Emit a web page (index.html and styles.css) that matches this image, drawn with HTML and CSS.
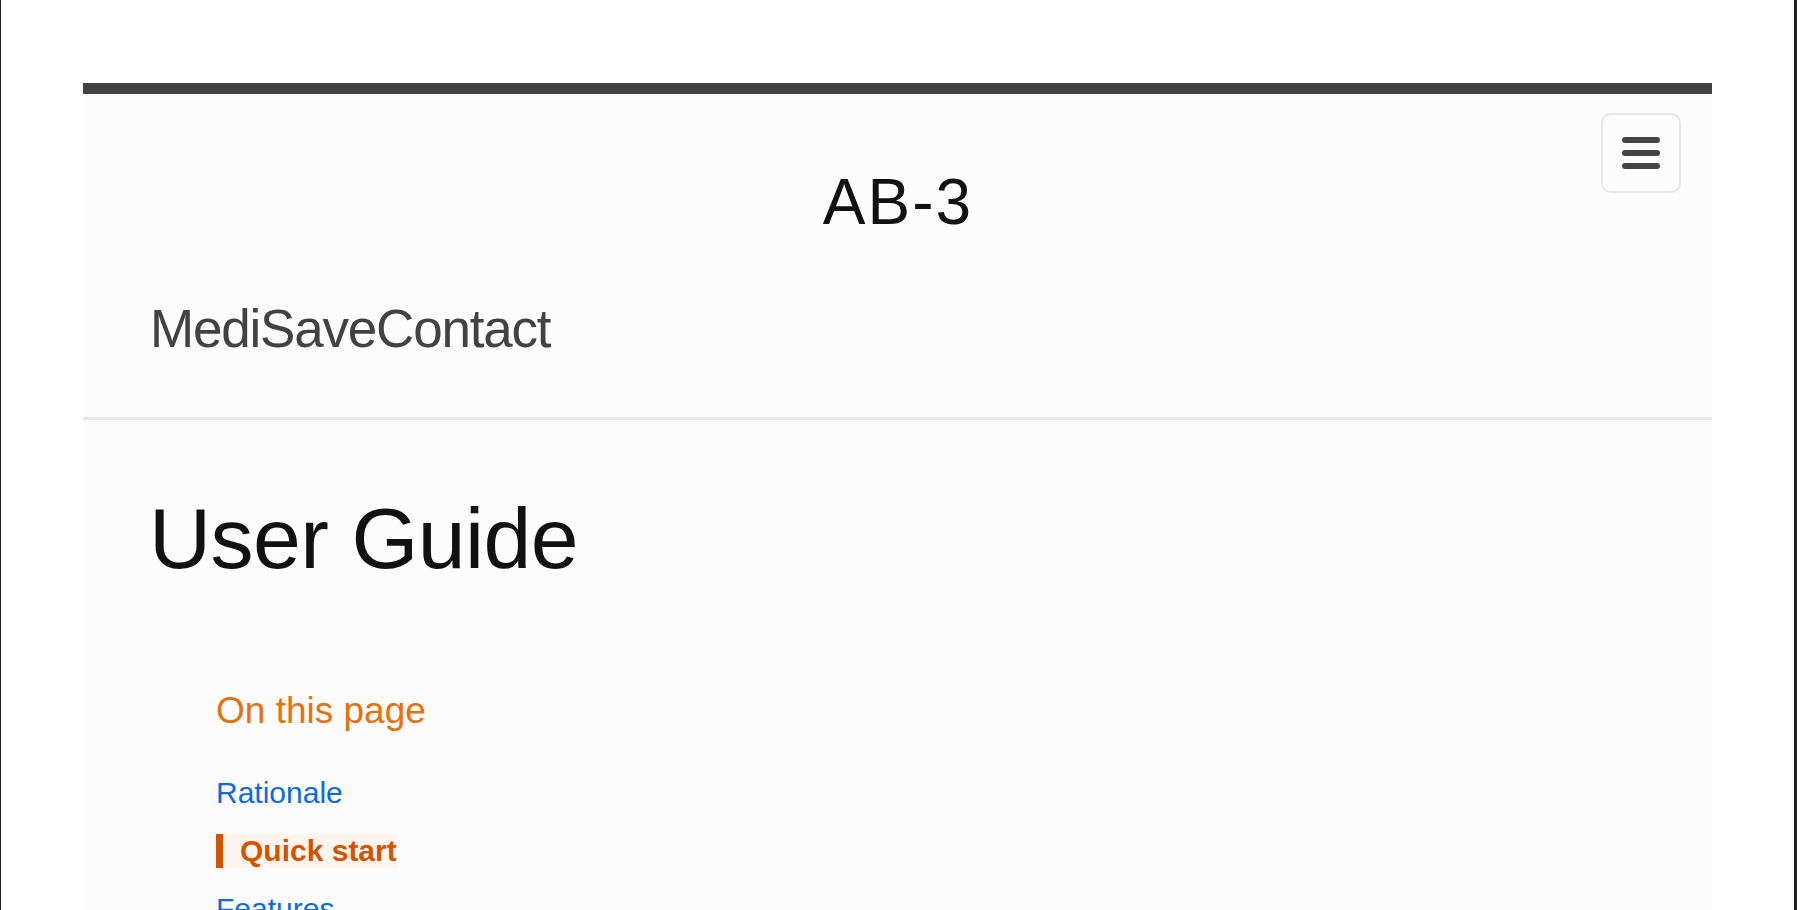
FILE: index.html
```html
<!DOCTYPE html>
<html lang="en">
<head>
<meta charset="utf-8">
<title>User Guide - MediSaveContact</title>
<link rel="stylesheet" href="styles.css">
</head>
<body>
<div class="frame">
  <div class="page">
    <header class="header">
      <button class="menu-btn" type="button" aria-label="Menu">
        <svg width="38" height="32" viewBox="0 0 38 32" aria-hidden="true">
          <rect x="0" y="0" width="38" height="6" rx="3" fill="#444"/>
          <rect x="0" y="13" width="38" height="6" rx="3" fill="#444"/>
          <rect x="0" y="26" width="38" height="6" rx="3" fill="#444"/>
        </svg>
      </button>
      <div class="site-title">AB-3</div>
      <div class="brand">MediSaveContact</div>
    </header>
    <main class="content">
      <h1 class="page-title">User Guide</h1>
      <nav class="toc">
        <div class="toc-title">On this page</div>
        <ul class="toc-list">
          <li><a class="toc-link" href="#rationale">Rationale</a></li>
          <li><a class="toc-link active" href="#quick-start">Quick start</a></li>
          <li><a class="toc-link" href="#features">Features</a></li>
          <li><a class="toc-link" href="#faq">FAQ</a></li>
        </ul>
      </nav>
    </main>
  </div>
</div>
</body>
</html>
```

FILE: styles.css
```css
html, body {
  margin: 0;
  padding: 0;
  background: #ffffff;
}

body {
  font-family: "Liberation Sans", Arial, Helvetica, sans-serif;
  overflow: hidden;
}

.frame {
  height: 910px;
  box-sizing: border-box;
  border-left: 1px solid #222222;
  border-right: 3px solid #222222;
  overflow: hidden;
}

.page {
  margin: 83px 82px 0;
  border-top: 11px solid #424242;
  background: #fcfcfc;
  min-height: 900px;
}

.header {
  position: relative;
  padding: 68px 66px 56px 67px;
  border-bottom: 3px solid #e8e8e8;
}

.menu-btn {
  position: absolute;
  top: 19px;
  right: 31px;
  width: 80px;
  height: 80px;
  box-sizing: border-box;
  border: 2px solid #e8e8e8;
  border-radius: 10px;
  background: #fcfcfc;
  padding: 0;
  display: flex;
  align-items: center;
  justify-content: center;
}

.site-title {
  font-size: 64px;
  line-height: 80px;
  color: #111111;
  text-align: center;
  letter-spacing: 2px;
}

.brand {
  margin-top: 55px;
  font-size: 53px;
  line-height: 64px;
  color: #424242;
  letter-spacing: -1.2px;
}

.content {
  padding: 68px 66px 0 66px;
}

.page-title {
  margin: 0;
  font-size: 86px;
  line-height: 100px;
  font-weight: normal;
  color: #111111;
  letter-spacing: -0.6px;
}

.toc {
  margin: 101px 0 0 67px;
}

.toc-title {
  font-size: 37px;
  line-height: 44px;
  color: #e8700d;
  margin-bottom: 43px;
}

.toc-list {
  list-style: none;
  margin: 0;
  padding: 0;
  display: flex;
  flex-direction: column;
  align-items: flex-start;
  gap: 24px;
}

.toc-link {
  display: inline-block;
  font-size: 30px;
  line-height: 34px;
  color: #0d6ae0;
  text-decoration: none;
}

.toc-link.active {
  font-weight: bold;
  color: #d35400;
  background: #fff4ee;
  border-left: 7px solid #d35400;
  padding-left: 17px;
}
```
